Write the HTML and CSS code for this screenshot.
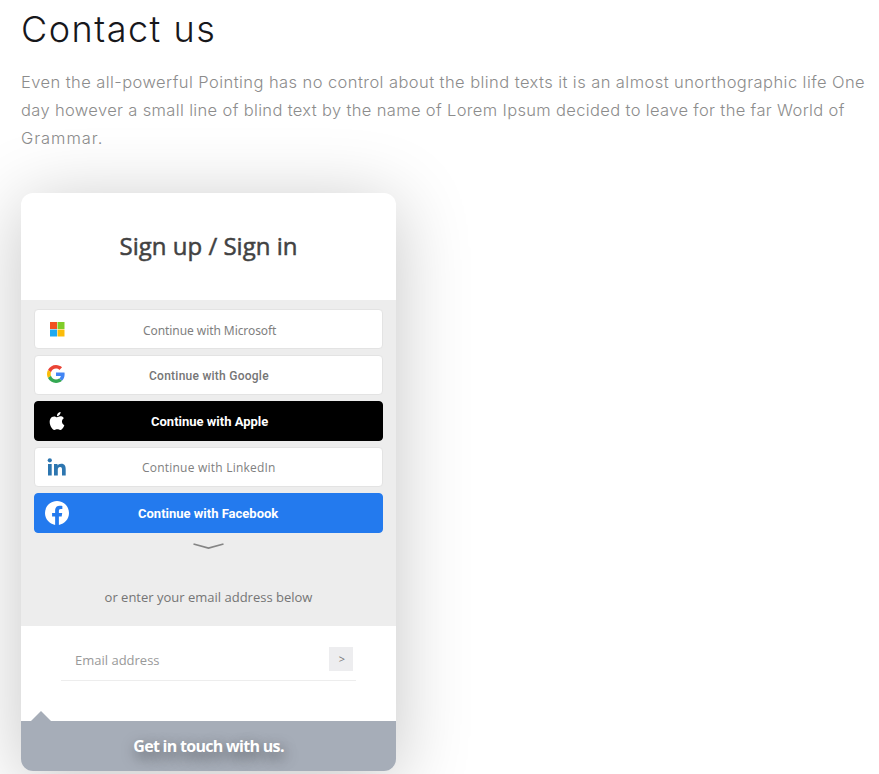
FILE: index.html
```
<!DOCTYPE html>
<html lang="en">
<head>
    <meta charset="UTF-8">
    <meta name="viewport" content="width=device-width, initial-scale=1.0">
    <title>Contact us</title>
    <link rel="stylesheet" href="styles.css">
</head>
<body>
    <div class="contact">
        <h1 class="title"><span>Contact us</span></h1>
        <p class="intro">
            <span class="line1">Even the all-powerful Pointing has no control about the blind texts it is an almost unorthographic life One</span><br>
            <span class="line2">day however a small line of blind text by the name of Lorem Ipsum decided to leave for the far World of</span><br>
            <span class="line3">Grammar.</span>
        </p>

        <div class="card">
            <h2 class="card-title"><span>Sign up / Sign in</span></h2>

            <div class="providers">
                <button class="provider microsoft">
                    <svg class="icon" width="24" height="24" viewBox="0 0 24 24">
                        <path fill="#f25022" d="M5 5h7v7H5z"/>
                        <path fill="#80cc28" d="M12.5 5h7v7h-7z"/>
                        <path fill="#1fa9f0" d="M5 12.5h7v7H5z"/>
                        <path fill="#fbbc09" d="M12.5 12.5h7v7h-7z"/>
                    </svg>
                    <span>Continue with Microsoft</span>
                </button>
                <button class="provider google">
                    <svg class="icon" width="18" height="18" viewBox="0 0 48 48">
                        <path fill="#ea4335" d="M24 9.5c3.54 0 6.71 1.22 9.21 3.6l6.85-6.85C35.9 2.38 30.47 0 24 0 14.62 0 6.51 5.38 2.56 13.22l7.98 6.19C12.43 13.72 17.74 9.5 24 9.5z"/>
                        <path fill="#4285f4" d="M46.98 24.55c0-1.57-.15-3.09-.38-4.55H24v9.02h12.94c-.58 2.96-2.26 5.48-4.78 7.18l7.73 6c4.51-4.18 7.09-10.36 7.09-17.65z"/>
                        <path fill="#fbbc05" d="M10.53 28.59c-.48-1.45-.76-2.99-.76-4.59s.27-3.14.76-4.59l-7.98-6.19C.92 16.46 0 20.12 0 24s.92 7.54 2.56 10.78l7.97-6.19z"/>
                        <path fill="#34a853" d="M24 48c6.48 0 11.93-2.13 15.89-5.81l-7.73-6c-2.15 1.45-4.92 2.3-8.16 2.3-6.26 0-11.57-4.22-13.47-9.91l-7.98 6.19C6.51 42.62 14.62 48 24 48z"/>
                    </svg>
                    <span>Continue with Google</span>
                </button>
                <button class="provider apple">
                    <svg class="icon" width="18" height="18" viewBox="0 0 24 24">
                        <path fill="#fff" d="M12.15 6.9c-.95 0-2.42-1.08-3.96-1.04-2.04.03-3.91 1.18-4.96 3.01-2.12 3.68-.55 9.1 1.52 12.09 1.01 1.45 2.21 3.09 3.79 3.04 1.52-.07 2.09-.99 3.94-.99 1.83 0 2.35.99 3.96.95 1.64-.03 2.68-1.48 3.68-2.95 1.16-1.69 1.64-3.33 1.66-3.42-.04-.01-3.18-1.22-3.22-4.86-.03-3.04 2.48-4.49 2.6-4.56-1.43-2.09-3.62-2.32-4.39-2.38-2-.15-3.68 1.09-4.62 1.11zM15.53 3.83c.84-1.01 1.4-2.43 1.25-3.83-1.21.05-2.66.81-3.53 1.82-.78.9-1.45 2.34-1.27 3.71 1.34.1 2.71-.69 3.55-1.7z"/>
                    </svg>
                    <span>Continue with Apple</span>
                </button>
                <button class="provider linkedin">
                    <svg class="icon" width="20" height="18" viewBox="0 0 20 18">
                        <g fill="#2d76b0">
                            <circle cx="2.8" cy="2.3" r="2.1"/>
                            <path d="M1 6h3.7v11.5H1zM7 6h3.5v1.6c.5-1 1.8-1.9 3.7-1.9 3.8 0 4.5 2.5 4.5 5.7v6.1H15v-5.4c0-1.3 0-3-1.9-3s-2.3 1.4-2.3 2.9v5.5H7z"/>
                        </g>
                    </svg>
                    <span>Continue with LinkedIn</span>
                </button>
                <button class="provider facebook">
                    <svg class="icon" width="24" height="24" viewBox="0 0 24 24">
                        <path fill="#fff" d="M24 12.07C24 5.44 18.63.07 12 .07S0 5.44 0 12.07c0 5.99 4.39 10.95 10.13 11.85v-8.38H7.08v-3.47h3.05V9.43c0-3.01 1.79-4.67 4.53-4.67 1.31 0 2.69.24 2.69.24v2.95h-1.52c-1.49 0-1.95.92-1.95 1.87v2.25h3.32l-.53 3.47h-2.79v8.38C19.61 23.02 24 18.06 24 12.07z"/>
                    </svg>
                    <span>Continue with Facebook</span>
                </button>
                <svg class="more" width="32" height="7" viewBox="0 0 32 7">
                    <path d="M.5 1l15 4 15-4" fill="none" stroke="#858585" stroke-width="1.8"/>
                </svg>
                <p class="hint"><span>or enter your email address below</span></p>
            </div>

            <div class="email">
                <div class="email-row">
                    <span class="email-label">Email address</span>
                    <button class="submit">&gt;</button>
                </div>
            </div>

            <div class="footer"><span>Get in touch with us.</span></div>
        </div>
    </div>
</body>
</html>
```
FILE: styles.css
```
body {
    margin: 0;
    background-color: #fff;
    font-family: "Open Sans", sans-serif;
    height: 774px;
    overflow: hidden;
}
.contact {
    padding: 0 0 0 21px;
}
.title {
    margin: 0;
    padding-top: 7px;
    height: 62px;
    box-sizing: border-box;
    font-family: Inter, sans-serif;
    font-size: 36px;
    font-weight: 300;
    line-height: 44px;
    letter-spacing: 1.5px;
    color: #17171b;
}
.intro {
    margin: 6px 0 40px;
    font-family: Inter, sans-serif;
    font-size: 16.5px;
    font-weight: 300;
    line-height: 28px;
    color: #8c8c8c;
    white-space: nowrap;
}
.line1 {
    letter-spacing: 0.43px;
}
.line2 {
    letter-spacing: 0.35px;
}
.line3 {
    letter-spacing: 0.95px;
}
.card {
    position: relative;
    width: 375px;
    height: 578px;
    margin-top: 41px;
    background-color: #fff;
    border-radius: 12px;
    box-shadow: 0 10px 75px rgba(0, 0, 0, 0.23);
}
.card-title {
    margin: 0;
    height: 107px;
    line-height: 106px;
    text-align: center;
    font-size: 24px;
    font-weight: 500;
    color: #424242;
    -webkit-text-stroke: 0.5px #424242;
}
.providers {
    display: flex;
    flex-direction: column;
    align-items: center;
    gap: 6px;
    height: 326px;
    padding: 9px 13px 0;
    box-sizing: border-box;
    background-color: #ededed;
}
.provider {
    display: flex;
    align-items: center;
    flex-shrink: 0;
    width: 349px;
    height: 40px;
    padding: 0;
    border: 1px solid #e3e3e3;
    border-radius: 4px;
    background-color: #fff;
    color: #757575;
    font-family: "Open Sans", sans-serif;
    font-size: 12px;
}
.icon {
    flex-shrink: 0;
}
.microsoft {
    color: #808080;
    font-family: "Noto Sans", sans-serif;
    letter-spacing: -0.07px;
}
.microsoft .icon {
    margin-left: 10px;
}
.microsoft span {
    margin: 3px 0 0 74px;
}
.google {
    font-family: Roboto, sans-serif;
    font-weight: 500;
    letter-spacing: 0.25px;
}
.google .icon {
    margin: 0 84px 3px 12px;
}
.google span {
    margin-top: 2px;
}
.apple {
    border-color: #000;
    background-color: #000;
    color: #fff;
    font-family: Roboto, sans-serif;
    font-size: 13px;
    font-weight: 700;
}
.apple .icon {
    margin: 0 85px 0 13px;
}
.apple span,
.facebook span {
    margin-top: 1px;
}
.linkedin {
    color: #808080;
    letter-spacing: 0.22px;
}
.linkedin .icon {
    margin: 0 75px 0 12px;
}
.facebook {
    border-color: #237aee;
    background-color: #237aee;
    color: #fff;
    font-family: Roboto, sans-serif;
    font-size: 13px;
    font-weight: 700;
}
.facebook .icon {
    margin: 0 69px 0 10px;
}
.more {
    flex-shrink: 0;
    margin-top: 4px;
}
.hint {
    margin: 31px 0 0;
    font-size: 13px;
    line-height: 20px;
    color: #757575;
}
.email {
    height: 95px;
    padding: 20px 40px 0;
    box-sizing: border-box;
}
.email-row {
    display: flex;
    justify-content: space-between;
    height: 35px;
    padding: 1px 3px 0 14px;
    box-sizing: border-box;
    border-bottom: 1px solid #ededed;
    font-size: 13px;
    color: #999;
}
.email-label {
    line-height: 27px;
}
.submit {
    width: 24px;
    height: 24px;
    padding: 0 0 2px 2px;
    border: none;
    background-color: #ededef;
    color: #777;
    font-family: "Open Sans", sans-serif;
    font-size: 11px;
}
.footer {
    position: relative;
    height: 50px;
    line-height: 51px;
    border-radius: 0 0 12px 12px;
    background-color: #a6adb8;
    color: #fff;
    text-align: center;
    font-size: 16px;
    font-weight: 700;
    letter-spacing: -0.7px;
    text-shadow: 2px 5px 14px rgba(0, 0, 0, 0.55);
}
/* small pointer above the footer */
.footer::before {
    content: "";
    position: absolute;
    left: 10px;
    top: -10px;
    border-left: 10px solid transparent;
    border-right: 10px solid transparent;
    border-bottom: 10px solid #a6adb8;
}
```
